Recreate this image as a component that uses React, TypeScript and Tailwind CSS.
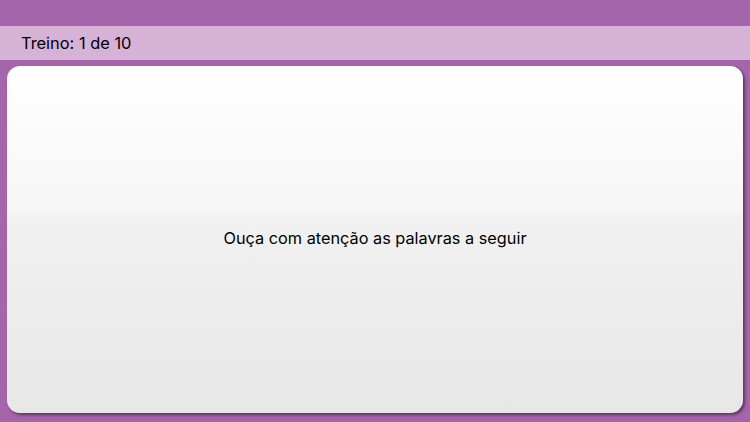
export default function App() {
  return (
    <div className="w-[750px] h-[422px] bg-[#a565aa] flex flex-col overflow-hidden font-['Inter','Liberation_Sans',sans-serif] text-black">
      <div className="h-[26px]" />
      <div className="h-[34px] bg-[#d6b2d6] flex items-center px-[21px] text-[16.4px]">Treino: 1 de 10</div>
      <div className="flex-1 px-[7px] pt-[6px] pb-[9px]">
        <div className="h-full rounded-[13px] shadow-[2px_2px_3px_rgba(0,0,0,0.45)] bg-[linear-gradient(to_bottom,#ffffff_0%,#f6f6f6_42%,#f1f1f1_44%,#e7e7e7_100%)] flex items-center justify-center">
          <p className="text-[16.3px] -mt-[2px]">Ouça com atenção as palavras a seguir</p>
        </div>
      </div>
    </div>
  );
}
